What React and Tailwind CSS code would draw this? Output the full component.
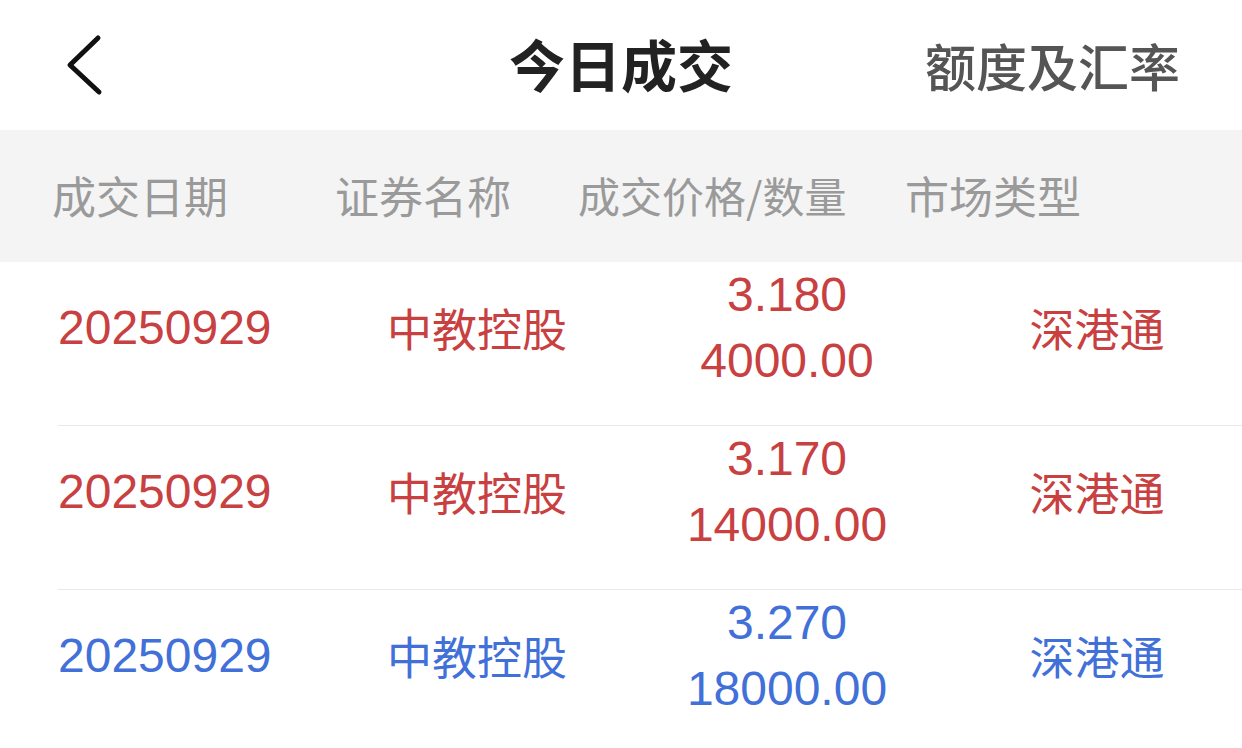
import React from "react";

const cjk = { fontFamily: '"Noto Sans CJK SC", "Noto Sans", sans-serif' };
const num = { fontFamily: '"Liberation Sans", Arial, "Noto Sans CJK SC", sans-serif' };

export default function App() {
  const rows = [
    { date: "20250929", name: "中教控股", price: "3.180", qty: "4000.00", market: "深港通", color: "text-[#c8403f]" },
    { date: "20250929", name: "中教控股", price: "3.170", qty: "14000.00", market: "深港通", color: "text-[#c8403f]" },
    { date: "20250929", name: "中教控股", price: "3.270", qty: "18000.00", market: "深港通", color: "text-[#4170d8]" },
  ];

  return (
    <div className="w-[1242px] h-[748px] overflow-hidden bg-white" style={cjk}>
      {/* nav bar */}
      <div className="grid grid-cols-3 items-center h-[130px]">
        <div className="pl-[64px] flex items-center">
          <svg width="44" height="62" viewBox="0 0 44 62" fill="none">
            <path d="M34 4 L6 31 L35 58" stroke="#111" strokeWidth="5" strokeLinecap="round" strokeLinejoin="round" />
          </svg>
        </div>
        <div className="text-center text-[56px] font-bold text-[#222] leading-none pb-[4px]">今日成交</div>
        <div className="text-right pr-[62px] text-[51px] font-medium text-[#555] leading-none">额度及汇率</div>
      </div>

      {/* table header */}
      <div className="flex items-center h-[132px] bg-[#f4f4f4] text-[#9a9a9a] text-[44px] leading-none pb-[2px]">
        <div className="pl-[52px] w-[335px] shrink-0">成交日期</div>
        <div className="w-[243px] shrink-0">证券名称</div>
        <div className="w-[327px] shrink-0 text-[42px]">成交价格/数量</div>
        <div className="shrink-0">市场类型</div>
      </div>

      {/* rows */}
      {rows.map((r, i) => (
        <div key={i} className="pl-[58px]">
          <div className={`flex items-center h-[164px] pb-[31px] border-b border-[#e9e9e9] ${r.color}`}>
            <div className="w-[258px] shrink-0 text-[48px]" style={num}>{r.date}</div>
            <div className="w-[322px] shrink-0 text-center text-[45px]">{r.name}</div>
            <div className="w-[298px] shrink-0 flex flex-col items-center text-[48px] leading-[66px]" style={num}>
              <span>{r.price}</span>
              <span>{r.qty}</span>
            </div>
            <div className="w-[322px] shrink-0 text-center text-[45px]">{r.market}</div>
          </div>
        </div>
      ))}
    </div>
  );
}
